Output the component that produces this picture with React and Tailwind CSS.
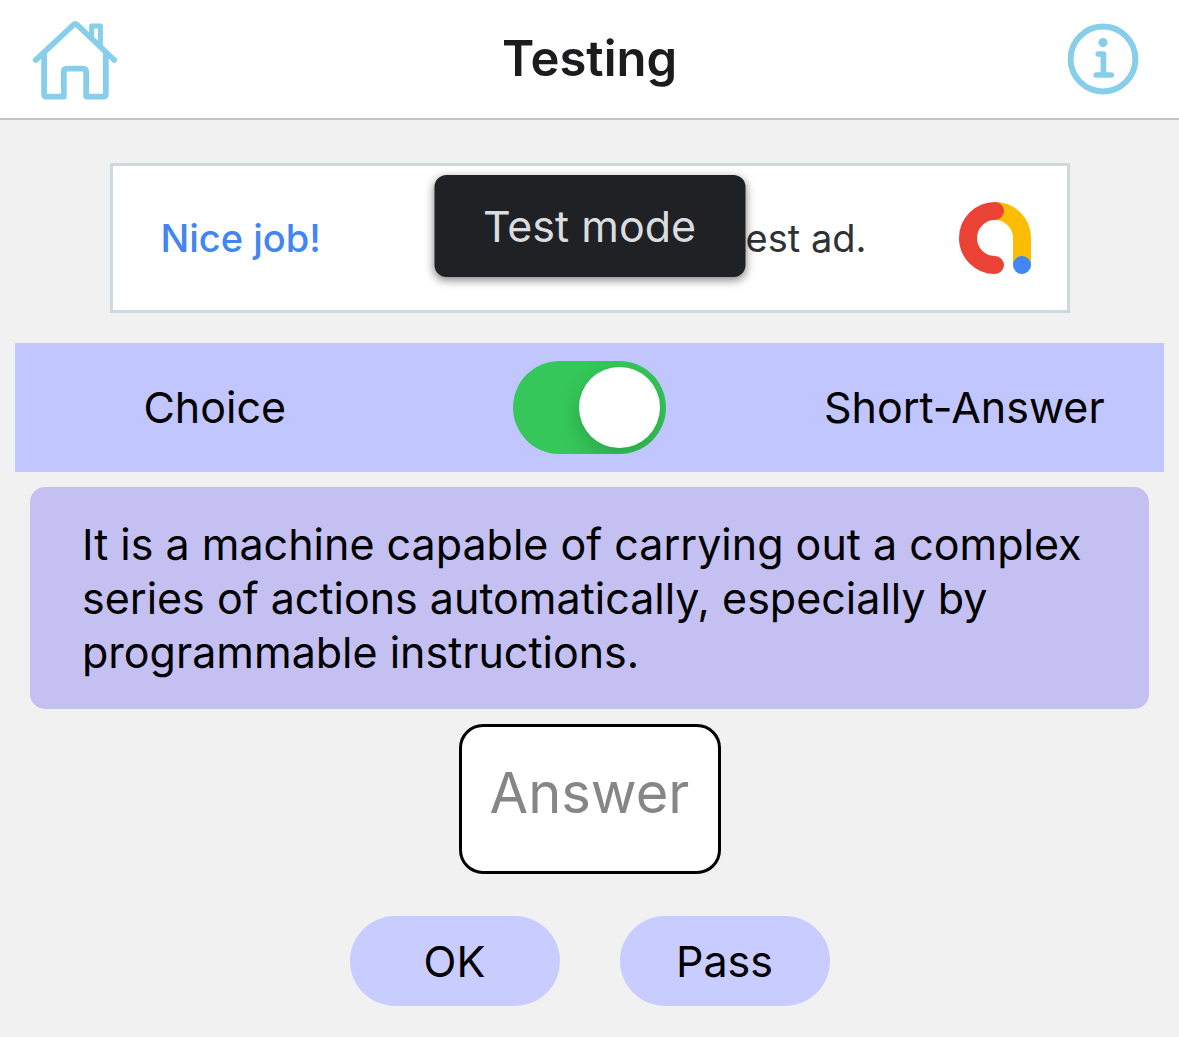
import { useState } from "react";

function HomeIcon() {
  return (
    <svg viewBox="30 15 90 88" className="h-[88px] w-[90px]" fill="none" stroke="#87ceeb" strokeWidth="5.8" strokeLinecap="round" strokeLinejoin="round" aria-hidden="true">
      <path d="M35.8 60 L73.2 25 Q75.3 23.2 77.4 25 L114.2 60" />
      <path d="M44.1 53 V94 Q44.1 96.6 46.7 96.6 H63.8 V72 Q63.8 68.6 67.2 68.6 H82.8 Q86.2 68.6 86.2 72 V96.6 H103.2 Q105.8 96.6 105.8 94 V53" />
      <path d="M91.6 36 V26.1 H100.4 V45" strokeWidth="5" />
    </svg>
  );
}

function InfoIcon() {
  return (
    <svg viewBox="0 0 72 72" className="size-[72px]" fill="none" stroke="#87ceeb" strokeLinecap="round" strokeLinejoin="round" aria-hidden="true">
      <circle cx="36" cy="36" r="32.4" strokeWidth="6" />
      <circle cx="36" cy="19.6" r="4.6" fill="#87ceeb" stroke="none" />
      <path d="M31.2 31 H36.4 V52 M29.2 52 H44.4" strokeWidth="5.6" />
    </svg>
  );
}

function AdLogo() {
  return (
    <svg viewBox="0 0 72 72" className="size-[72px]" fill="none" strokeWidth="18" aria-hidden="true">
      <path d="M36 9 A27 27 0 0 1 63 36 V63" stroke="#fbbc04" />
      <path d="M36 9 A27 27 0 0 0 36 63" stroke="#ea4335" strokeLinecap="round" />
      <circle cx="63" cy="63" r="9" fill="#4285f4" />
    </svg>
  );
}

export default function App() {
  const [shortAnswer, setShortAnswer] = useState(true);
  const [answer, setAnswer] = useState("");

  return (
    <div className="min-h-screen bg-[#f1f1f1] font-[Inter,sans-serif] text-black">
      <header className="flex h-[120px] items-center border-b-2 border-[#c4c4c4] bg-white pr-10 pl-[30px]">
        <div className="flex flex-1 justify-start">
          <button type="button" aria-label="Home">
            <HomeIcon />
          </button>
        </div>
        <h1 className="pl-2.5 text-[49px] font-semibold text-[#1c1c1e]">Testing</h1>
        <div className="flex flex-1 justify-end">
          <button type="button" aria-label="Information">
            <InfoIcon />
          </button>
        </div>
      </header>

      <main className="flex flex-col items-center px-[15px] pt-[43px] pb-[30px]">
        <section aria-label="Advertisement" className="relative flex h-[150px] w-full max-w-[960px] items-center border-[3px] border-[#cfd8dc] bg-white pr-9 pl-12 text-[38px]">
          <span className="font-medium text-[#4285f4]">Nice job!</span>
          <span className="ml-auto pr-[92px] text-[#303134]">test ad.</span>
          <AdLogo />
          <div className="absolute top-[9px] left-1/2 flex h-[102px] w-[311px] -translate-x-1/2 items-center justify-center rounded-xl bg-[#202124] text-[43px] text-[#dadce0] shadow-[0_3px_10px_rgba(0,0,0,0.5)]">
            Test mode
          </div>
        </section>

        <div className="mt-[30px] flex h-[129px] w-full items-center bg-[#c2c6ff] text-[43px]">
          <span className="flex-1 text-center">Choice</span>
          <div className="flex w-[350px] justify-center">
            <input
              type="checkbox"
              role="switch"
              aria-label="Short-Answer"
              checked={shortAnswer}
              onChange={(e) => setShortAnswer(e.target.checked)}
              className="h-[93px] w-[153px] cursor-pointer appearance-none overflow-hidden rounded-full bg-gray-300 p-1.5 before:block before:size-[81px] before:rounded-full before:bg-white before:shadow-[0_8px_22px_rgba(0,0,0,0.18)] checked:bg-[#35c759] checked:before:ml-[60px]"
            />
          </div>
          <span className="flex-1 text-center">Short-Answer</span>
        </div>

        <div className="mt-[15px] w-full px-[15px]">
          <p className="rounded-[15px] bg-[#c4c0f2] px-[52px] py-[30px] text-[43px] leading-[54px]">
            It is a machine capable of carrying out a complex series of actions automatically, especially by programmable instructions.
          </p>
        </div>

        <input
          type="text"
          aria-label="Answer"
          placeholder="Answer"
          value={answer}
          onChange={(e) => setAnswer(e.target.value)}
          className="mt-[15px] h-[150px] w-[262px] rounded-[24px] border-[3px] border-black bg-white px-5 pb-3 text-center text-[56px] placeholder:text-[#868686]"
        />

        <div className="mt-[42px] flex gap-[60px] text-[43px]">
          <button type="button" className="h-[90px] w-[210px] rounded-full bg-[#c9ccff]">OK</button>
          <button type="button" className="h-[90px] w-[210px] rounded-full bg-[#c9ccff]">Pass</button>
        </div>
      </main>
    </div>
  );
}
